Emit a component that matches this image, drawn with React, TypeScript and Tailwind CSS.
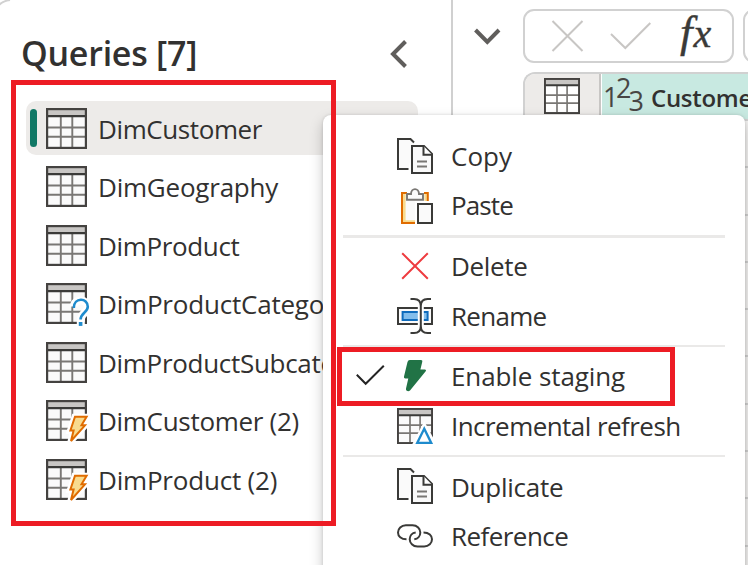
import React from "react";

type Badge = "question" | "bolt" | "delta";

function TableIcon({ size = 41, badge, white = false }: { size?: number; badge?: Badge; white?: boolean }) {
  return (
    <svg width={size} height={size} viewBox="0 0 41 41" className="block shrink-0 overflow-visible">
      <rect x="1" y="1" width="39" height="39" fill={white ? "#fff" : "#fafafa"} />
      <rect x="1" y="1" width="39" height="7" fill="#c8c6c4" />
      <path d="M14.8 9V39M26.3 9V39M1 19.5H40M1 28.7H40" stroke="#797774" strokeWidth="1.9" fill="none" />
      <path d="M0 8.2H41" stroke="#3a3a38" strokeWidth="2.2" />
      <rect x="1.1" y="1.1" width="38.8" height="38.8" fill="none" stroke="#444240" strokeWidth="2.2" />
      {badge === "question" && (
        <g fill="none">
          <path d="M28 23.5C28 15.5 41.8 15.5 41.8 24C41.8 29.5 34.8 30 34.8 37V42" stroke="#fff" strokeWidth="8" />
          <path d="M27.8 25C27.8 14.3 41.8 14.3 41.8 23.8C41.8 29.3 34.6 29.8 34.6 36.6" stroke="#1e8bcd" strokeWidth="2.6" />
          <path d="M34.6 39V42.9" stroke="#1e8bcd" strokeWidth="3.6" />
        </g>
      )}
      {badge === "bolt" && (
        <g strokeLinejoin="miter">
          <path d="M28.5 16.8H41L36 25.2H39.6L24.4 42L27 31H23.8Z" fill="#fff" stroke="#fff" strokeWidth="6" />
          <path d="M29 16.8H40.6L35.5 25.3H39L25 41L27.6 30.5H24.4Z" fill="#f8db8f" stroke="#e06c00" strokeWidth="2" />
        </g>
      )}
      {badge === "delta" && (
        <g>
          <path d="M31 15L17.5 41H45L31 15Z" fill="#fff" />
          <path d="M31 23.5L23 39.8H39Z" fill="#fff" stroke="#1e8bcd" strokeWidth="2.6" />
        </g>
      )}
    </svg>
  );
}

function CopyIcon() {
  return (
    <svg width="36" height="36" viewBox="0 0 36 36" fill="none" stroke="#3a3a38" strokeWidth="2">
      <path d="M11.5 31H1V1H13.5L17 4.5" fill="#fafafa" />
      <path d="M15 8H27L35 16V35H15Z" fill="#fafafa" />
      <path d="M26.5 8V16.7H35" fill="#fff" />
      <path d="M20 23.5H30M20 28.5H30" stroke="#797774" strokeWidth="2" />
    </svg>
  );
}

function PasteIcon() {
  return (
    <svg width="36" height="36" viewBox="0 0 36 36" fill="none">
      <path d="M5 5H31V35H5Z" fill="#fafafa" />
      <path d="M7.3 6V33.5H18M28.7 6V13" stroke="#f8db8f" strokeWidth="2.6" />
      <path d="M10 5H5V35H18M27 5H30.8V13" stroke="#e06c00" strokeWidth="2" />
      <path d="M18 13H36V36H18Z" fill="#fff" />
      <path d="M10 11.7V6H14C14 -.5 22 -.5 22 6H26V11.7Z" fill="#fafafa" stroke="#797774" strokeWidth="1.9" />
      <rect x="21" y="16" width="14" height="19" fill="#fafafa" stroke="#3a3a38" strokeWidth="2" />
    </svg>
  );
}

function DeleteIcon() {
  return (
    <svg width="36" height="36" viewBox="0 0 36 36" fill="none" stroke="#ee3b3f" strokeWidth="2">
      <path d="M5.2 5.2L30.8 30.8M30.8 5.2L5.2 30.8" />
    </svg>
  );
}

function RenameIcon() {
  return (
    <svg width="36" height="36" viewBox="0 0 36 36" fill="none">
      <rect x="1" y="10" width="34" height="16" fill="#fafafa" stroke="#3a3a38" strokeWidth="2" />
      <rect x="5.6" y="14" width="25" height="8" fill="#83beec" stroke="#0f6cbd" strokeWidth="2" />
      <path d="M23.8 8V28" stroke="#fff" strokeWidth="6" />
      <path d="M13.5 1H17Q23.8 1 23.8 8V28Q23.8 35 17 35H13.5M34 1H30.6Q23.8 1 23.8 8M23.8 28Q23.8 35 30.6 35H34" stroke="#3a3a38" strokeWidth="2" />
    </svg>
  );
}

function StagingIcon() {
  return (
    <svg width="36" height="36" viewBox="0 0 36 36">
      <path d="M12.8 2H24Q25.8 2 25.3 3.8L23.4 11.4H27.7Q29.8 11.6 28.5 13.4L13 32.4Q11.5 33.8 9.8 32.8Q8.7 32 9 30.4L11.3 20.5H8.4Q6.5 20.4 7 18.5L10.5 3.9Q11 2 12.8 2Z" fill="#217346" />
    </svg>
  );
}

function LinkIcon() {
  return (
    <svg width="36" height="36" viewBox="0 0 36 36" fill="none" stroke="#3a3a38" strokeWidth="2">
      <path d="M9.5 21.3C4 21.3 1 18 1 14.4C1 10.8 4.2 7.2 8.8 7.2H15.5C20.2 7.2 23.3 10.7 23.3 14.4C23.3 18 20.8 20.8 17.3 21.2" />
      <path d="M26.5 14.4C32 14.4 35 17.6 35 21.3C35 25 31.8 28.5 27.2 28.5H20.5C15.8 28.5 12.7 25 12.7 21.3C12.7 17.6 15.2 14.8 18.7 14.4" />
    </svg>
  );
}

const queries: { name: string; badge?: Badge; tracking: string; selected?: boolean }[] = [
  { name: "DimCustomer", tracking: "tracking-[-0.4px]", selected: true },
  { name: "DimGeography", tracking: "tracking-[-0.22px]" },
  { name: "DimProduct", tracking: "tracking-[-0.35px]" },
  { name: "DimProductCategory", badge: "question", tracking: "tracking-[-0.2px]" },
  { name: "DimProductSubcategory", tracking: "tracking-[-0.3px]" },
  { name: "DimCustomer (2)", badge: "bolt", tracking: "tracking-[-0.3px]" },
  { name: "DimProduct (2)", badge: "bolt", tracking: "tracking-[-0.2px]" },
];

function MenuItem({ icon, label, tracking, checked }: { icon: React.ReactNode; label: string; tracking: string; checked?: boolean }) {
  return (
    <div className="flex h-[49.5px] items-center pl-[33px]">
      <div className="w-[41px] shrink-0">
        {checked && (
          <svg width="29" height="22" viewBox="0 0 29 22" fill="none" stroke="#242424" strokeWidth="2">
            <path d="M.8 9.7L9.7 18.8L27.8 .8" />
          </svg>
        )}
      </div>
      <div className="w-[54px] shrink-0">{icon}</div>
      <span className={`whitespace-nowrap text-[26px] ${tracking}`}>{label}</span>
    </div>
  );
}

function Separator({ thick = false }: { thick?: boolean }) {
  return (
    <div className="flex h-[11px] items-center pr-5 pl-5">
      <div className={`w-full bg-[#eae9e8] ${thick ? "h-[3px]" : "h-[2px]"}`} />
    </div>
  );
}

export default function App() {
  return (
    <div className="relative flex h-[565px] w-[748px] overflow-hidden bg-white font-['Open_Sans','Noto_Sans',sans-serif] text-[#323130]">
      <aside className="h-[580px] w-[453px] shrink-0 border-r-2 border-[#d0d0d0]">
        <header className="flex h-[101px] items-center justify-between pr-[43px] pl-[21px] pt-[6px]">
          <h1 className="whitespace-nowrap text-[34px] font-semibold tracking-[-0.25px]">Queries [7]</h1>
          <svg width="19" height="28" viewBox="0 0 19 28" fill="none" stroke="#605e5c" strokeWidth="4">
            <path d="M16.5 1.5L4 14L16.5 26.5" />
          </svg>
        </header>
        <ul className="flex flex-col gap-[4.5px] pr-[33px] pl-[26px]">
          {queries.map((q) => (
            <li key={q.name} className={`flex h-[54px] items-center rounded-[10px] ${q.selected ? "bg-[#edebe9]" : ""}`}>
              <span className={`ml-1 mr-[9px] h-[38px] w-[7px] shrink-0 rounded-full ${q.selected ? "bg-[#117865]" : ""}`} />
              <TableIcon badge={q.badge} />
              <span className={`ml-[11px] whitespace-nowrap pt-[2px] text-[26px] ${q.tracking}`}>{q.name}</span>
            </li>
          ))}
        </ul>
      </aside>

      <main className="w-[295px] shrink-0">
        <div className="flex h-[72px] pt-[9px]">
          <svg width="70" height="54" viewBox="0 0 70 54" fill="none" stroke="#605e5c" strokeWidth="4" className="shrink-0">
            <path d="M22.5 21L34.3 33L46 21" />
          </svg>
          <div className="flex h-[54px] w-[211px] shrink-0 rounded-[11px] border-2 border-[#d1d1d1]">
            <svg width="130" height="50" viewBox="0 0 130 50" fill="none" stroke="#c8c6c4" strokeWidth="2" className="shrink-0">
              <path d="M27.5 10L57.5 40M57.5 10L27.5 40M86 23L100.3 37L125.3 12" />
            </svg>
            <span className="ml-[25px] h-[50px] font-['Liberation_Serif',serif] text-[45px] leading-[43px] tracking-[1px] whitespace-nowrap italic text-[#3a3a38] [-webkit-text-stroke:0.4px_#3a3a38]">
              f<span className="text-[40px]">x</span>
            </span>
          </div>
          <div className="ml-[9px] h-[54px] w-[60px] shrink-0 rounded-l-[11px] border-2 border-[#d1d1d1]" />
        </div>
        <div className="ml-[70px] flex h-[49px] overflow-hidden rounded-tl-[12px] border-t-2 border-b-2 border-l-2 border-[#d1d1d1]">
          <div className="w-[76px] shrink-0 border-r-2 border-[#c8c6c4] bg-[#edebe9] pt-[4px] pl-[19px]">
            <TableIcon size={36} white />
          </div>
          <div className="flex w-[180px] shrink-0 items-start border-l border-white bg-[#c8e9e1] pl-px">
            <div className="flex w-[48px] shrink-0 text-[27px] leading-none font-normal text-[#484644]">
              <span className="w-[13px] pt-[9px]">1</span>
              <span className="w-[12.5px]">2</span>
              <span className="pt-[13px]">3</span>
            </div>
            <span className="whitespace-nowrap pt-[6px] text-[24px] leading-[36px] font-semibold tracking-[-0.3px]">CustomerKey</span>
          </div>
        </div>
        {Array.from({ length: 10 }, (_, i) => (
          <div key={i} className="ml-[70px] h-[47.3px] border-b-2 border-[#d1d1d1] bg-[#f3f2f1]" />
        ))}
      </main>

      <div className="absolute top-[115px] left-[323px] h-[470px] w-[422px] rounded-[8px] bg-white pt-[16.5px] shadow-[0_6px_14px_rgba(0,0,0,0.22),0_0_3px_rgba(0,0,0,0.14)]">
        <MenuItem icon={<CopyIcon />} label="Copy" tracking="tracking-[0px]" />
        <MenuItem icon={<PasteIcon />} label="Paste" tracking="tracking-[-0.9px]" />
        <Separator thick />
        <MenuItem icon={<DeleteIcon />} label="Delete" tracking="tracking-[-0.35px]" />
        <MenuItem icon={<RenameIcon />} label="Rename" tracking="tracking-[-0.7px] pt-px" />
        <Separator />
        <MenuItem icon={<StagingIcon />} label="Enable staging" tracking="tracking-[-0.1px]" checked />
        <MenuItem icon={<TableIcon size={36} badge="delta" />} label="Incremental refresh" tracking="tracking-[-0.55px] pt-px" />
        <Separator />
        <MenuItem icon={<CopyIcon />} label="Duplicate" tracking="tracking-[-0.25px] pt-[2px]" />
        <MenuItem icon={<LinkIcon />} label="Reference" tracking="tracking-[-0.55px] pt-px" />
      </div>

      <div className="absolute top-[80px] left-[11px] h-[446px] w-[325px] border-[5px] border-[#ed1c24]" />
      <div className="absolute top-[347px] left-[337px] h-[59px] w-[338px] border-[5px] border-[#ed1c24]" />
      <svg width="12" height="6" viewBox="0 0 12 6" className="absolute top-0 left-0" fill="none" stroke="#d1d1d1" strokeWidth="2">
        <path d="M-1 5Q3 1 10 0" />
      </svg>
    </div>
  );
}
